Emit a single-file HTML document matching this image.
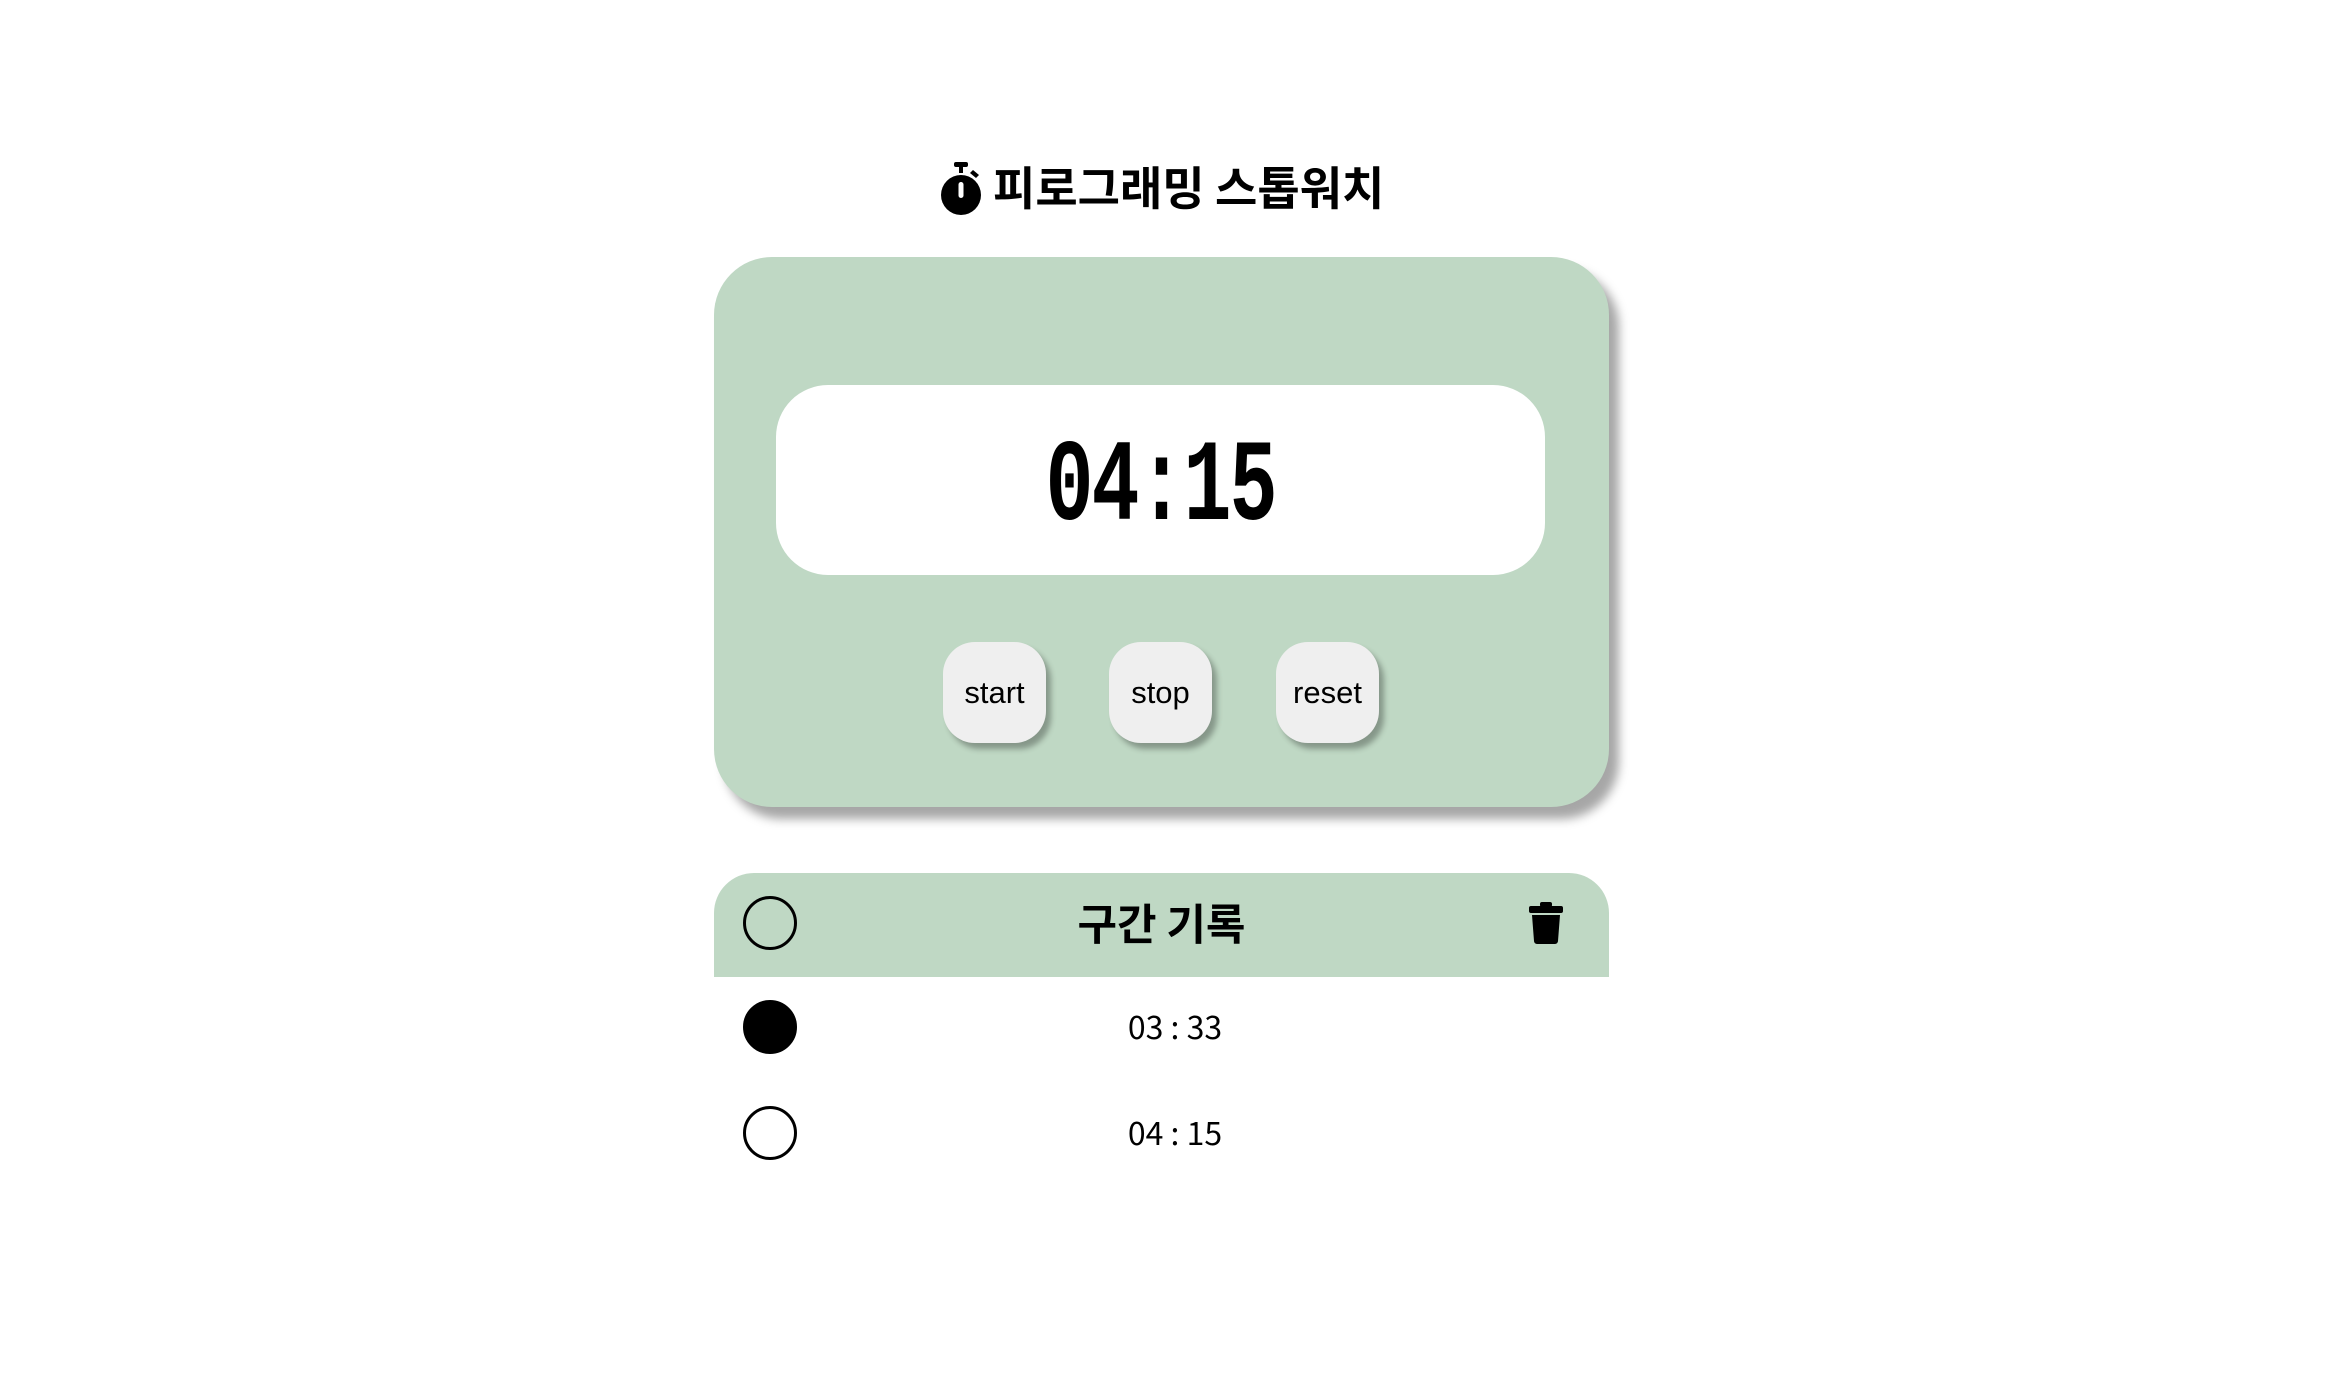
<!DOCTYPE html>
<html><head><meta charset="utf-8"><style>
html,body{margin:0;padding:0;background:#fff;width:2332px;height:1386px;overflow:hidden;position:relative;font-family:"Liberation Sans","Noto Sans CJK KR",sans-serif;}
.abs{position:absolute}
.title{left:993px;top:152px;white-space:nowrap;font-size:46px;font-weight:bold;font-family:"Noto Sans CJK KR","Liberation Sans",sans-serif;line-height:68px;color:#000}
.card{left:714px;top:257px;width:895px;height:550px;background:#bfd8c4;border-radius:58px;box-shadow:10px 12px 10px rgba(0,0,0,0.35)}
.disp{left:776px;top:385px;width:769px;height:190px;background:#fff;border-radius:52px}
.time{left:776px;width:769px;top:445px;text-align:center;font-family:"Liberation Mono",monospace;font-weight:bold;font-size:80px;line-height:90px;letter-spacing:-2px;transform:scaleY(1.45);transform-origin:50% 50%}
.btn{top:642px;width:103px;height:101px;background:#efefef;border-radius:32px;box-shadow:5px 6px 6px rgba(0,0,0,0.3);text-align:center;line-height:101px;font-size:31px;color:#000}
.head{left:714px;top:873px;width:895px;height:104px;background:#bfd8c4;border-radius:40px 40px 0 0}
.circ{width:54px;height:54px;border:3.5px solid #000;border-radius:50%;box-sizing:border-box}
.ht{left:714px;width:895px;top:890px;text-align:center;font-size:43px;font-weight:bold;font-family:"Noto Sans CJK KR",sans-serif;line-height:64px}
.row{left:714px;width:922px;text-align:center;font-size:32px;font-family:"Noto Sans CJK KR",sans-serif;line-height:40px}
</style></head><body>
<svg class="abs" style="left:940px;top:162px" width="44" height="54" viewBox="0 0 44 54">
<rect x="14" y="0" width="14" height="5" rx="2"/><rect x="19" y="3" width="4" height="8"/>
<path d="M33 8 l6 5 -3 3 -6 -5z"/>
<circle cx="21" cy="33" r="20"/>
<rect x="18.5" y="20" width="5" height="16" rx="2.5" fill="#fff"/>
</svg>
<div class="abs title">피로그래밍 스톱워치</div>
<div class="abs card"></div>
<div class="abs disp"></div>
<div class="abs time">04:15</div>
<div class="abs btn" style="left:943px">start</div>
<div class="abs btn" style="left:1109px">stop</div>
<div class="abs btn" style="left:1276px">reset</div>
<div class="abs head"></div>
<div class="abs circ" style="left:743px;top:896px"></div>
<div class="abs ht">구간 기록</div>
<svg class="abs" style="left:1529px;top:902px" width="34" height="42" viewBox="0 0 34 42">
<rect x="11" y="0" width="12" height="5" rx="2"/><rect x="0" y="4" width="34" height="7" rx="2"/>
<path d="M3 13 h28 l-2 26 a3 3 0 0 1 -3 3 h-18 a3 3 0 0 1 -3 -3z"/>
</svg>
<div class="abs circ" style="left:743px;top:1000px;background:#000"></div>
<div class="abs row" style="top:1006px">03 : 33</div>
<div class="abs circ" style="left:743px;top:1106px"></div>
<div class="abs row" style="top:1112px">04 : 15</div>
</body></html>
